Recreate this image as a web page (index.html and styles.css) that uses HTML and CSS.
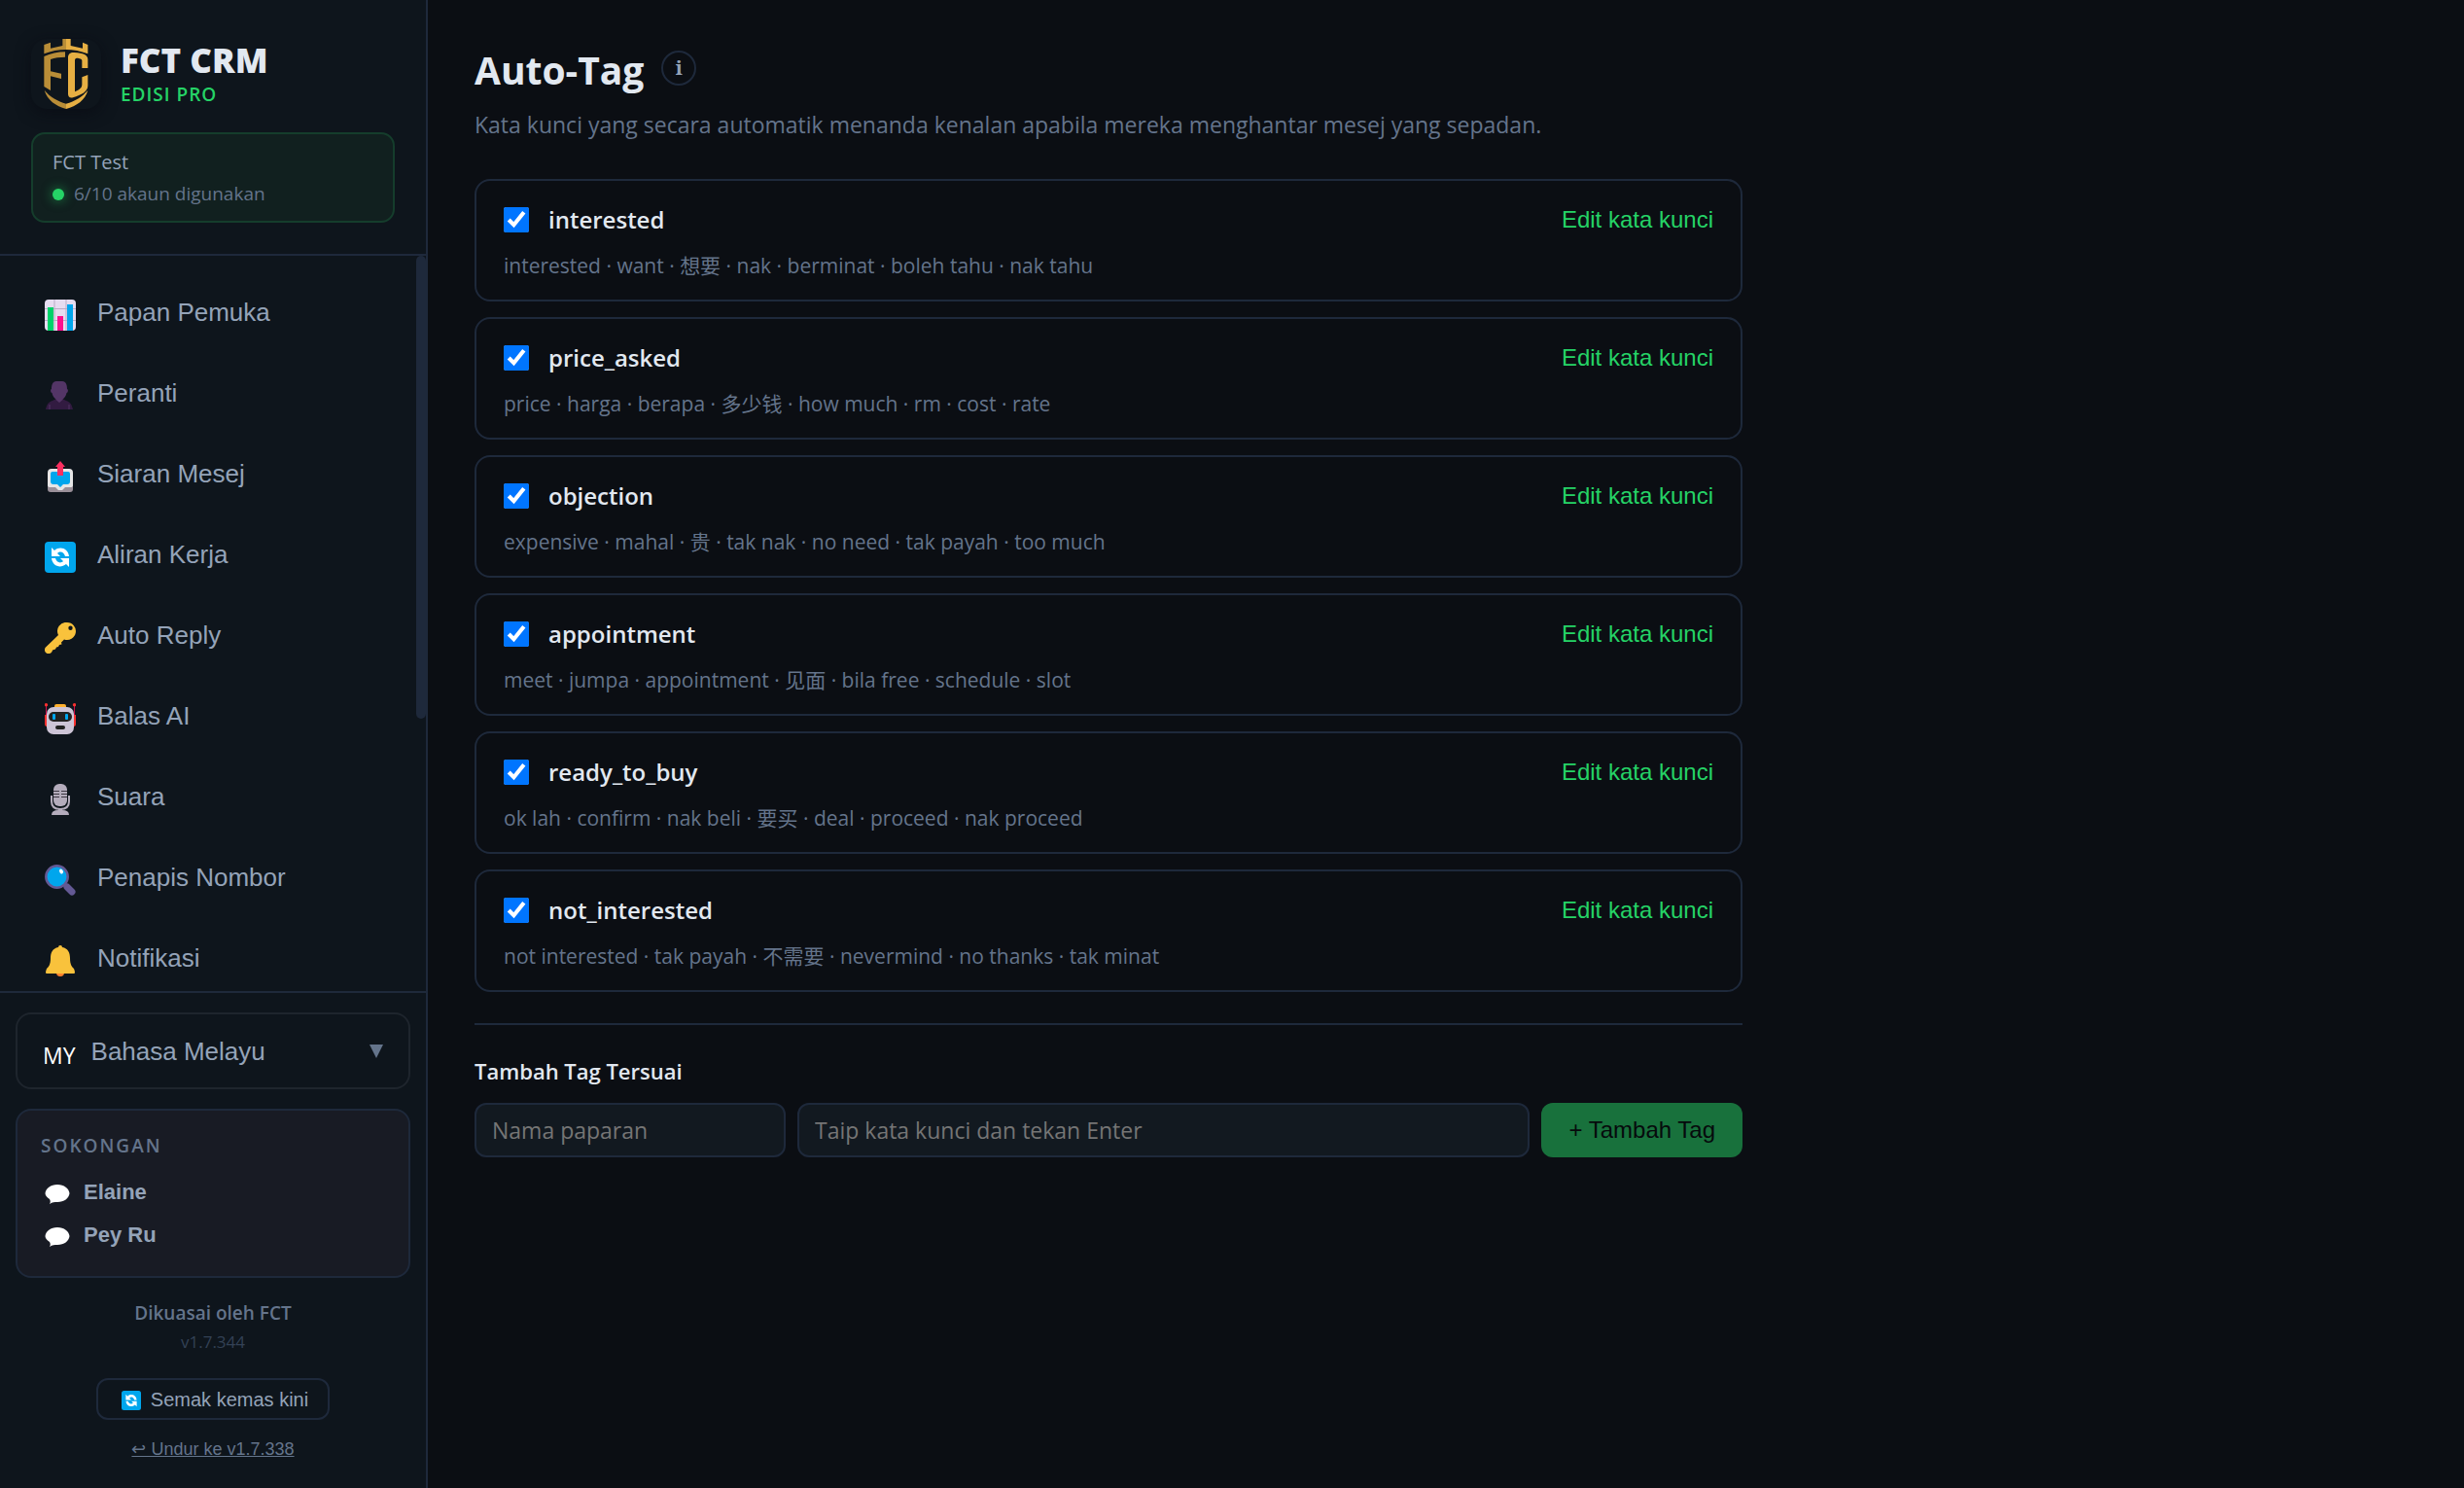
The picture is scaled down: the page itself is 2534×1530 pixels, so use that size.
FILE: index.html
```html
<!DOCTYPE html>
<html lang="ms">

<head>
  <meta charset="UTF-8">
  <meta name="viewport" content="width=device-width, initial-scale=1.0">
  <title>FCT CRM - Auto-Tag</title>
  <link rel="stylesheet" href="styles.css">
</head>

<body>
  <!-- shared icons -->
  <svg class="defs" aria-hidden="true">
    <symbol id="sync" viewBox="0 0 32 32">
      <rect width="32" height="32" rx="4" fill="#00a6ed" />
      <path d="M7 6v9h9l-3-3c3-3 7-1 8 3h4C24 7 16 4 10 9zM25 26v-9h-9l3 3c-3 3-7 1-8-3H7c1 8 9 11 15 6z" fill="#fff" />
    </symbol>
    <symbol id="bubble" viewBox="0 0 26 22">
      <path d="M13 1c7 0 12 4 12.500 9C25 15 20 19 13 19c-3 0-5 0-8 2 1-2 1-3 0-5C2 14 .5 12 .5 10 1 5 6 1 13 1z" fill="#fff" />
    </symbol>
  </svg>

  <aside class="sidebar">
    <header class="brand">
      <div class="brand-row">
        <svg class="logo" viewBox="0 0 216 216" aria-hidden="true">
          <defs>
            <linearGradient id="gold">
              <stop offset=".5" stop-color="#b98d37" />
              <stop offset=".5" stop-color="#e6af43" />
            </linearGradient>
          </defs>
          <g fill="url(#gold)">
            <path d="M40 18l20-7v18l37-8V0h25v21l37 8V11l16 7v28c-44-17-91-17-135 0z" />
            <path d="M40 54c20-9 42-14 65-14v16c-17 0-32 2-45 7v37l33 7v16l-33-8v44l-20-12z" fill="#b98d37" />
            <path d="M114 58c0-12 8-17 19-16 29 2 42 8 42 21v27h-18V67c0-5-8-8-16-8-4 0-6 3-6 7v97c14-7 22-12 22-23v-22l18-7v33c0 18-19 29-46 37-9 3-15-3-15-11z" fill="#e6af43" />
            <path d="M41 158c18 22 41 34 67 42 27-8 49-20 67-42-8 31-35 49-67 58-32-9-58-27-67-58z" />
          </g>
        </svg>
        <div>
          <div class="brand-name">FCT CRM</div>
          <div class="brand-edition">EDISI PRO</div>
        </div>
      </div>
      <div class="license">
        <div class="license-name">FCT Test</div>
        <div class="license-usage"><span class="dot"></span>6/10 akaun digunakan</div>
      </div>
    </header>

    <nav class="nav">
      <div class="nav-list">
        <button class="nav-item" type="button">
          <svg viewBox="0 0 32 32">
            <rect width="32" height="32" rx="4" fill="#e6dcf0" />
            <path d="M10 0v32M22 0v32M0 9.500h32M0 21.500h32" stroke="#b9abc6" fill="none" />
            <path d="M3 8h6v24H3z" fill="#00d26a" />
            <path d="M13 17h6v15h-6z" fill="#fc0f8f" />
            <path d="M23 5h6v27h-6z" fill="#00a6ed" />
          </svg>
          Papan Pemuka
        </button>
        <button class="nav-item" type="button">
          <svg viewBox="0 0 32 32">
            <path d="M1 30c1-5 3-8 7-9l4-2h6l4 2c4 1 6 4 7 9z" fill="#321b41" />
            <path d="M12 1h6c4 0 5 4 5 8 1.500 0 1 4-.5 4-.5 3-2 5-4 6.500V20l-3.500 3-3.500-3v-.5c-2-1.500-3.500-3.500-4-6.500C6 13 5.500 9 7 9c0-4 1-8 5-8z" fill="#533566" />
            <path d="M5 25v5M25 25v5" stroke="#533566" />
          </svg>
          Peranti
        </button>
        <button class="nav-item" type="button">
          <svg viewBox="0 0 32 32">
            <rect x="3" y="14" width="26" height="18" rx="3" fill="#998f98" />
            <path d="M7 8h18q4 0 4 4v13q0 2-3 2h-5l-3 3h-4l-3-3H6q-3 0-3-2V12q0-4 4-4z" fill="#e6e6e6" />
            <path d="M8 11h16q2 0 2 2v8q0 3-3 3h-4l-3 3-3-3H9q-3 0-3-3v-8q0-2 2-2z" fill="#00a6ed" />
            <path d="M16 0l5 6h-2v9h-6V6h-2z" fill="#f92f60" />
          </svg>
          Siaran Mesej
        </button>
        <button class="nav-item" type="button">
          <svg><use href="#sync" /></svg>
          Aliran Kerja
        </button>
        <button class="nav-item" type="button">
          <svg viewBox="0 0 32 32">
            <path fill-rule="evenodd" d="M23 0a9 9 0 1 1-3 17.500l-3 3 .5 2-2.500.5-1 2-2 .5-1 2-3 1-.5 1.500a4 4 0 1 1-6-5L14 13A9 9 0 0 1 23 0zm3.500 3.500a2.200 2.200 0 1 0 0 4.400 2.200 2.200 0 0 0 0-4.400z" fill="#f9c23c" />
          </svg>
          Auto Reply
        </button>
        <button class="nav-item" type="button">
          <svg viewBox="0 0 32 32">
            <path d="M1.500 2v20M30.500 2v20" stroke="#ca0b4a" />
            <path d="M0 12h4v12H2q-2 0-2-3zM28 12h4v9q0 3-2 3h-2z" fill="#f8312f" />
            <circle cx="1.500" cy="1.800" r="1.700" fill="#f8312f" />
            <circle cx="30.500" cy="1.800" r="1.700" fill="#f8312f" />
            <rect x="10" y="1" width="12" height="6" rx="2" fill="#ffb02e" />
            <rect x="2" y="4" width="28" height="28" rx="7" fill="#cdc4d6" />
            <rect x="4" y="9" width="24" height="10" rx="5" fill="#212121" />
            <rect x="8" y="11" width="3" height="6" rx="1" fill="#00a6ed" />
            <rect x="21" y="11" width="3" height="6" rx="1" fill="#00a6ed" />
            <rect x="11" y="23" width="10" height="4" rx="2" fill="#212121" />
          </svg>
          Balas AI
        </button>
        <button class="nav-item" type="button">
          <svg viewBox="0 0 32 32">
            <path d="M7 12v6q0 8 9 8t9-8v-6" fill="none" stroke="#b4acbc" stroke-width="2" />
            <rect x="9" width="14" height="23" rx="6" fill="#b4acbc" />
            <path d="M9 7.500h6M17 7.500h6M9 10.500h6M17 10.500h6M9 13.500h6M17 13.500h6" stroke="#3c3742" />
            <path d="M14 26h4v1q7 0 7 5H7q0-5 7-5z" fill="#b4acbc" />
          </svg>
          Suara
        </button>
        <button class="nav-item" type="button">
          <svg viewBox="0 0 32 32">
            <path d="M20 20l8 8" stroke="#635994" stroke-width="4" />
            <path d="M23 23l5 5" stroke="#635994" stroke-width="7" stroke-linecap="round" />
            <circle cx="12.500" cy="12.500" r="11.200" fill="#00a6ed" stroke="#635994" stroke-width="2.500" />
            <ellipse cx="17" cy="7" rx="1.800" ry="2.500" transform="rotate(-30 17 7)" fill="#fff" />
          </svg>
          Penapis Nombor
        </button>
        <button class="nav-item" type="button">
          <svg viewBox="0 0 32 32">
            <path d="M12 28a4 4 0 0 0 8 0z" fill="#ff822d" />
            <path d="M14 2q0-2 2-2t2 2c6 1 8 6 8 11 0 7 2 9 4 11q2 5 0 5H2q-2 0 0-5c2-2 4-4 4-11 0-5 2-10 8-11z" fill="#f9c23c" />
          </svg>
          Notifikasi
        </button>
      </div>
      <div class="nav-rail">
        <div class="nav-thumb"></div>
      </div>
    </nav>

    <footer class="side-footer">
      <button class="lang" type="button">
        <span class="lang-code">MY</span>
        <span class="lang-name">Bahasa Melayu</span>
        <svg class="caret" viewBox="0 0 14 14"><path d="M0 0h14L7 14z" /></svg>
      </button>

      <div class="support">
        <div class="support-title">SOKONGAN</div>
        <a class="support-link" href="#"><svg><use href="#bubble" /></svg>Elaine</a>
        <a class="support-link" href="#"><svg><use href="#bubble" /></svg>Pey Ru</a>
      </div>

      <div class="about">
        <div class="powered">Dikuasai oleh FCT</div>
        <div class="version">v1.7.344</div>
        <button class="update" type="button"><svg><use href="#sync" /></svg>Semak kemas kini</button>
        <a class="rollback" href="#">↩ Undur ke v1.7.338</a>
      </div>
    </footer>
  </aside>

  <main class="main">
    <div class="content">
      <div class="title-row">
        <h1>Auto-Tag</h1>
        <button class="info" type="button" aria-label="Maklumat">i</button>
      </div>
      <p class="subtitle">Kata kunci yang secara automatik menanda kenalan apabila mereka menghantar mesej yang sepadan.</p>

      <div class="tags">
        <section class="tag">
          <div class="tag-head">
            <label><input type="checkbox" checked>interested</label>
            <button class="edit" type="button">Edit kata kunci</button>
          </div>
          <p>interested · want · 想要 · nak · berminat · boleh tahu · nak tahu</p>
        </section>
        <section class="tag">
          <div class="tag-head">
            <label><input type="checkbox" checked>price_asked</label>
            <button class="edit" type="button">Edit kata kunci</button>
          </div>
          <p>price · harga · berapa · 多少钱 · how much · rm · cost · rate</p>
        </section>
        <section class="tag">
          <div class="tag-head">
            <label><input type="checkbox" checked>objection</label>
            <button class="edit" type="button">Edit kata kunci</button>
          </div>
          <p>expensive · mahal · 贵 · tak nak · no need · tak payah · too much</p>
        </section>
        <section class="tag">
          <div class="tag-head">
            <label><input type="checkbox" checked>appointment</label>
            <button class="edit" type="button">Edit kata kunci</button>
          </div>
          <p>meet · jumpa · appointment · 见面 · bila free · schedule · slot</p>
        </section>
        <section class="tag">
          <div class="tag-head">
            <label><input type="checkbox" checked>ready_to_buy</label>
            <button class="edit" type="button">Edit kata kunci</button>
          </div>
          <p>ok lah · confirm · nak beli · 要买 · deal · proceed · nak proceed</p>
        </section>
        <section class="tag">
          <div class="tag-head">
            <label><input type="checkbox" checked>not_interested</label>
            <button class="edit" type="button">Edit kata kunci</button>
          </div>
          <p>not interested · tak payah · 不需要 · nevermind · no thanks · tak minat</p>
        </section>
      </div>

      <form class="add">
        <h2>Tambah Tag Tersuai</h2>
        <div class="add-row">
          <input class="add-name" type="text" placeholder="Nama paparan" aria-label="Nama paparan">
          <input class="add-words" type="text" placeholder="Taip kata kunci dan tekan Enter" aria-label="Kata kunci">
          <button class="add-btn" type="button" disabled>+ Tambah Tag</button>
        </div>
      </form>
    </div>
  </main>
</body>

</html>
```

FILE: styles.css
```css
:root {
  --bg: #0b0e13;
  --side: #0e151c;
  --line: #1e293b;
  --text: #e2e8f0;
  --soft: #94a3b8;
  --muted: #64748b;
  --green: #25d366;
  --ui: "Open Sans", "Noto Sans CJK SC", sans-serif;
  --btn: "Liberation Sans", Arial, sans-serif;
}

* {
  box-sizing: border-box;
}

body {
  margin: 0;
  height: 100vh;
  display: flex;
  overflow: hidden;
  background: var(--bg);
  color: var(--text);
  font-family: var(--ui);
}

h1,
h2,
p {
  margin: 0;
}

button {
  margin: 0;
  border: 0;
  background: none;
  font-family: var(--btn);
}

svg {
  display: block;
  flex-shrink: 0;
}

.defs {
  display: none;
}

/* sidebar */
.sidebar {
  width: 440px;
  flex-shrink: 0;
  display: flex;
  flex-direction: column;
  background: var(--side);
  border-right: 2px solid var(--line);
}

.brand {
  padding: 40px 32px 32px;
  border-bottom: 2px solid var(--line);
}

.brand-row {
  display: flex;
  align-items: center;
  gap: 20px;
}

.logo {
  width: 72px;
  height: 72px;
  border-radius: 16px;
  box-shadow: 0 4px 16px rgba(8, 10, 18, .7);
}

.brand-name {
  font-size: 35px;
  line-height: 42px;
  font-weight: 800;
}

.brand-edition {
  font-size: 19px;
  line-height: 28px;
  font-weight: 600;
  letter-spacing: 1px;
  color: var(--green);
}

.license {
  margin-top: 24px;
  padding: 12px 20px;
  background: #11201f;
  border: 2px solid #153d2c;
  border-radius: 14px;
}

.license-name {
  font-size: 20px;
  line-height: 34px;
  color: var(--soft);
}

.license-usage {
  display: flex;
  align-items: center;
  gap: 10px;
  font-size: 19px;
  line-height: 31px;
  color: var(--muted);
}

.dot {
  width: 12px;
  height: 12px;
  border-radius: 50%;
  background: var(--green);
  box-shadow: 0 0 12px rgba(37, 211, 102, .6);
}

.nav {
  flex: 1;
  min-height: 0;
  display: flex;
  overflow: hidden;
}

.nav-list {
  flex: 1;
  padding: 18px 6px 0 16px;
}

.nav-item {
  width: 100%;
  height: 79px;
  margin-bottom: 4px;
  padding: 0 30px;
  display: flex;
  align-items: center;
  gap: 22px;
  font-size: 26px;
  line-height: 32px;
  color: var(--soft);
}

.nav-item svg {
  width: 32px;
  height: 32px;
  margin-top: 6px;
}

.nav-rail {
  width: 10px;
}

.nav-thumb {
  height: 63%;
  border-radius: 5px;
  background: var(--line);
}

.side-footer {
  padding: 20px 16px 28px;
  border-top: 2px solid var(--line);
}

.lang {
  width: 100%;
  height: 79px;
  padding: 0 26px;
  display: flex;
  align-items: center;
  border: 2px solid #1e252d;
  border-radius: 16px;
}

.lang-code {
  margin: 8px 16px 0 0;
  font-family: var(--ui);
  font-size: 23px;
  line-height: 28px;
  font-weight: 500;
  color: #fff;
}

.lang-name {
  flex: 1;
  text-align: left;
  font-size: 26px;
  line-height: 32px;
  color: var(--soft);
}

.caret {
  width: 14px;
  height: 14px;
  fill: var(--muted);
}

.support {
  margin-top: 20px;
  padding: 20px 24px;
  background: #181b24;
  border: 2px solid var(--line);
  border-radius: 16px;
}

.support-title {
  margin-bottom: 10px;
  font-size: 19px;
  line-height: 32px;
  font-weight: 600;
  letter-spacing: 2px;
  color: var(--muted);
}

.support-link {
  display: flex;
  align-items: center;
  gap: 14px;
  padding-left: 4px;
  font-family: var(--btn);
  font-size: 22px;
  line-height: 44px;
  font-weight: 700;
  color: var(--soft);
  text-decoration: none;
}

.support-link svg {
  width: 26px;
  height: 22px;
  margin-top: 4px;
}

.about {
  padding-top: 20px;
  display: flex;
  flex-direction: column;
  align-items: center;
}

.powered {
  font-size: 19px;
  line-height: 32px;
  font-weight: 600;
  color: var(--muted);
}

.version {
  font-size: 17px;
  line-height: 28px;
  color: #334155;
}

.update {
  height: 43px;
  margin-top: 23px;
  padding: 2px 20px 0 24px;
  display: flex;
  align-items: center;
  gap: 10px;
  border: 2px solid var(--line);
  border-radius: 12px;
  font-size: 20px;
  color: var(--soft);
}

.update svg {
  width: 20px;
  height: 20px;
}

.rollback {
  margin-top: 18px;
  font-family: var(--btn);
  font-size: 18px;
  line-height: 24px;
  color: var(--muted);
}

/* page */
.main {
  flex: 1;
  padding: 42px 48px;
}

.content {
  max-width: 1304px;
}

.title-row {
  display: flex;
  align-items: center;
  gap: 18px;
}

h1 {
  font-size: 39px;
  line-height: 60px;
  font-weight: 700;
}

.info {
  width: 36px;
  height: 36px;
  margin-bottom: 4px;
  padding: 0;
  border: 2px solid var(--line);
  border-radius: 50%;
  font: 700 20px/32px "Noto Serif", "DejaVu Serif", serif;
  color: var(--soft);
}

.subtitle {
  margin-top: 8px;
  font-size: 23px;
  line-height: 36px;
  color: var(--muted);
}

.tags {
  margin-top: 38px;
  display: flex;
  flex-direction: column;
  gap: 16px;
}

.tag {
  padding: 22px 28px 18px;
  border: 2px solid var(--line);
  border-radius: 16px;
}

.tag-head {
  display: flex;
  align-items: center;
  justify-content: space-between;
}

.tag label {
  display: flex;
  align-items: center;
  gap: 20px;
  font-size: 24px;
  line-height: 36px;
  font-weight: 600;
}

.tag input {
  width: 26px;
  height: 26px;
  margin: 0;
  accent-color: #0075ff;
}

.edit {
  padding: 0;
  font-size: 24px;
  line-height: 36px;
  color: var(--green);
}

.tag p {
  margin-top: 12px;
  font-size: 21px;
  line-height: 34px;
  color: var(--muted);
}

.add {
  margin-top: 32px;
  padding-top: 30px;
  border-top: 2px solid var(--line);
}

h2 {
  font-size: 22px;
  line-height: 34px;
  font-weight: 600;
}

.add-row {
  display: flex;
  gap: 12px;
  margin-top: 16px;
}

.add-row input {
  height: 56px;
  min-width: 0;
  padding: 0 16px;
  background: #121920;
  border: 2px solid var(--line);
  border-radius: 12px;
  font: 23px var(--ui);
  color: var(--text);
}

.add-row input::placeholder {
  color: #757575;
}

.add-row .add-name {
  width: 320px;
}

.add-row .add-words {
  flex: 1;
}

.add-btn {
  height: 56px;
  padding: 0 28px;
  border-radius: 12px;
  background: #18713c;
  font-size: 24px;
  color: #060a0c;
}
```
